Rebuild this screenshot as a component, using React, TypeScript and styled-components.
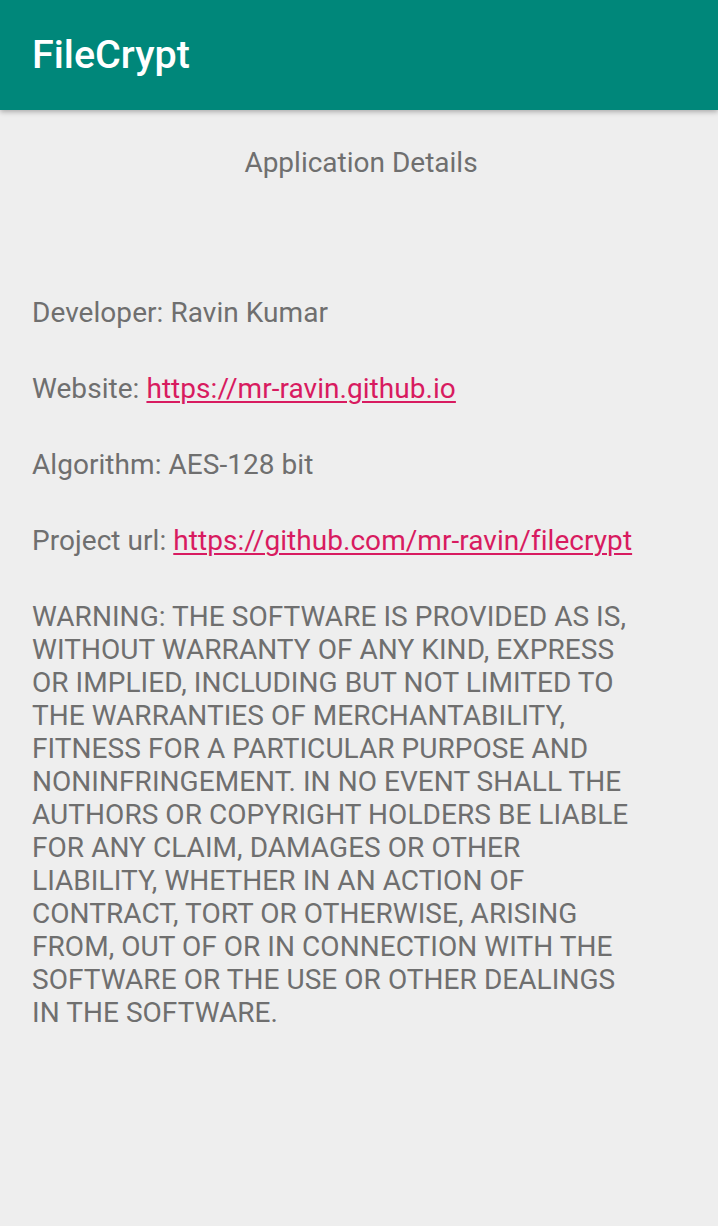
import React from "react";
import styled, { createGlobalStyle } from "styled-components";

const Global = createGlobalStyle`
  html, body { margin: 0; padding: 0; background: #eeeeee; }
  body { font-family: Roboto, "Noto Sans", sans-serif; -webkit-font-smoothing: antialiased; }
  #root { min-height: 1226px; background: #eeeeee; }
`;

const Page = styled.div`
  display: flex;
  flex-direction: column;
  min-height: 1226px;
  background: #eeeeee;
`;

const Toolbar = styled.header`
  height: 110px;
  background: #00877a;
  display: flex;
  align-items: center;
  padding: 0 32px;
  box-shadow: 0 2px 5px rgba(0, 0, 0, 0.28);
  position: relative;
  z-index: 1;
`;

const Title = styled.h1`
  margin: 0;
  color: #ffffff;
  font-family: Roboto, sans-serif;
  font-weight: 500;
  font-size: 39.5px;
  line-height: 46px;
`;

const Content = styled.main`
  display: flex;
  flex-direction: column;
  padding: 36px 32px 0 32px;
`;

const Heading = styled.h2`
  margin: 0 0 117px 0;
  padding-left: 4px;
  text-align: center;
  font-weight: 400;
  font-size: 28px;
  line-height: 33px;
  color: #6f6f6f;
`;

const Para = styled.p<{ $narrow?: boolean }>`
  margin: 0 0 43px 0;
  font-size: 28px;
  line-height: 33px;
  letter-spacing: 0.05px;
  color: #6f6f6f;
  max-width: ${(p) => (p.$narrow ? "600px" : "none")};
  white-space: ${(p) => (p.$narrow ? "normal" : "nowrap")};
`;

const Link = styled.a`
  color: #d81b60;
  text-decoration: underline;
  text-underline-offset: 3px;
  text-decoration-thickness: 2px;
`;

export default function App() {
  return (
    <Page>
      <Global />
      <Toolbar>
        <Title>FileCrypt</Title>
      </Toolbar>
      <Content>
        <Heading>Application Details</Heading>
        <Para>Developer: Ravin Kumar</Para>
        <Para>
          Website: <Link href="#">https://mr-ravin.github.io</Link>
        </Para>
        <Para>Algorithm: AES-128 bit</Para>
        <Para>
          Project url: <Link href="#">https://github.com/mr-ravin/filecrypt</Link>
        </Para>
        <Para $narrow>
          WARNING: THE SOFTWARE IS PROVIDED AS IS, WITHOUT WARRANTY OF ANY KIND, EXPRESS OR
          IMPLIED, INCLUDING BUT NOT LIMITED TO THE WARRANTIES OF MERCHANTABILITY, FITNESS FOR A
          PARTICULAR PURPOSE AND NONINFRINGEMENT. IN NO EVENT SHALL THE AUTHORS OR COPYRIGHT
          HOLDERS BE LIABLE FOR ANY CLAIM, DAMAGES OR OTHER LIABILITY, WHETHER IN AN ACTION OF
          CONTRACT, TORT OR OTHERWISE, ARISING FROM, OUT OF OR IN CONNECTION WITH THE SOFTWARE OR
          THE USE OR OTHER DEALINGS IN THE SOFTWARE.
        </Para>
      </Content>
    </Page>
  );
}
